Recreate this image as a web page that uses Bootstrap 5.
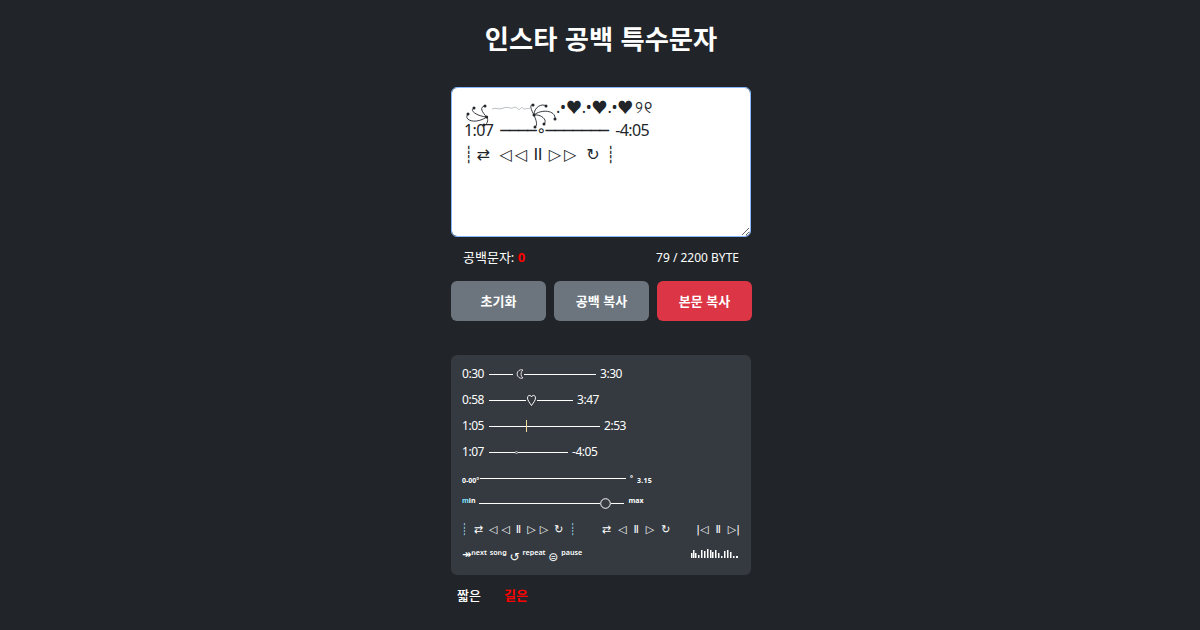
<!DOCTYPE html>
<html lang="ko">
<head>
<meta charset="utf-8">
<title>인스타 공백 특수문자</title>
<link rel="stylesheet" href="https://cdn.jsdelivr.net/npm/bootstrap@5.3.0/dist/css/bootstrap.min.css">
<style>
body{background:#212529;color:#fff;font-family:"Noto Sans","Noto Sans CJK KR",sans-serif;overflow:hidden;height:630px}
.shell{width:300px;margin:0 auto 0 451px}
.ttl{font-size:26.3px;font-weight:700;line-height:36px;margin:20px 0 31px;text-align:center;white-space:nowrap;font-family:"Noto Sans CJK KR",sans-serif}
.ed{position:relative;height:150px}
.ed textarea{height:150px;width:100%;font-family:"Noto Sans","DejaVu Sans","Noto Sans CJK KR",sans-serif;font-size:16px;line-height:24px;border-color:#86b7fe;border-radius:6px;color:#212529;white-space:pre;overflow:hidden;letter-spacing:-.65px;box-shadow:none}
.orn{position:absolute;left:10px;top:12px;pointer-events:none}
.hrts{position:absolute;left:105px;top:8px;line-height:24px;font-size:16px;color:#212529;font-family:"Noto Sans","Noto Sans CJK KR","DejaVu Sans",sans-serif;letter-spacing:-.2px;white-space:nowrap;pointer-events:none}
.hrts span{letter-spacing:.5px;margin-left:2px}
.stat{font-size:12px;height:42px;margin-bottom:2px;padding:0 12px}
.stat .kr{font-size:13px}
.stat b{color:#f00}
.acts{margin-right:-1px}
.acts .btn{flex:1 1 0;height:40px;font-size:13px;font-weight:700;color:#fff;border:0;border-radius:6px;font-family:"Noto Sans CJK KR",sans-serif;padding:0}
.acts .g1{background:#6c757d}.acts .g2{background:#dc3545}
.pane{background:#343a40;border-radius:6px;height:220px;margin-top:34px;padding:6px 11px 0;font-size:12px}
.ln{height:26px;white-space:nowrap;letter-spacing:-.45px}
.ln span.t{width:22px;flex:none}
.seg{display:block;height:1px;background:#fff;flex:none}
.w24{width:24px}.w72{width:72px}.w37{width:37px}.w36{width:36px}.w73{width:73px}.w26{width:26px}.w50{width:50px}.w146{width:146px}.w121{width:121px}.w13{width:13px}
.mk{flex:none}
.ln .tx{margin-left:4px}
.ln .s1{margin-left:5px}
.tiny{font-size:7px;font-weight:700;font-family:"Noto Sans",sans-serif;line-height:1;flex:none;white-space:nowrap}
.low{height:23px}
.r5{margin-top:2px}
.r6{margin-top:2px}
.dn{margin-top:4px}
.up{margin-top:-6px}
.lb1{width:18px}
.wd{letter-spacing:.3px}
.cy{color:#7fe3ff}
.ctl{height:29px;margin-top:1px;font-family:"DejaVu Sans",sans-serif;font-size:11px;white-space:nowrap;margin-left:-1px}
.ctl i{font-style:normal;flex:none;display:block;text-align:center}
.gl{gap:6px}
.gm{gap:7px}
.pr{margin-left:-2px}
.sep{color:#9ad7f0}
.fine{height:20px;font-family:"Noto Sans","DejaVu Sans",sans-serif;font-size:11px;font-weight:600;white-space:nowrap;margin-top:-1px}
.fine .big{font-size:12px;font-family:"DejaVu Sans",sans-serif;font-weight:400;position:relative;top:3px}
.bars{margin-top:-3px}
.tabs{font-size:13px;font-family:"Noto Sans CJK KR",sans-serif;height:40px;padding-left:6px;gap:23px}
.tabs .on{color:#f00;font-weight:700}
.tabs span:first-child{font-weight:500}
</style>
</head>
<body>
<div class="shell">
  <h1 class="ttl">인스타 공백 특수문자</h1>
  <div class="ed">
    <textarea class="form-control" spellcheck="false">

1:07  ────∘───────  -4:05
┊ ⇄   ◁ ◁  ⅠⅠ  ▷ ▷   ↻  ┊</textarea>
    <span class="hrts">.•♥.•♥.•♥<span>୨୧</span></span>
    <svg class="orn" width="110" height="32" viewBox="461 99 110 32" fill="none" stroke="#212529" stroke-width=".9">
      <g fill="#212529" stroke="none">
        <circle cx="486.7" cy="117" r="1.500"/><circle cx="485" cy="106" r="1.500"/><circle cx="474" cy="108" r="1.500"/><circle cx="468" cy="114" r="1.500"/><circle cx="484" cy="125" r="1.500"/>
        <circle cx="534" cy="115" r="1.500"/><circle cx="533" cy="105" r="1.500"/><circle cx="546" cy="106" r="1.500"/><circle cx="555" cy="119" r="1.500"/><circle cx="544" cy="124" r="1.500"/><circle cx="535" cy="127" r="1.500"/>
      </g>
      <path d="M486.7 117C482 112 479 107 485 106M486.7 117C476 116 469 110 474 108M486.7 117C475 125 463 120 468 114M486.7 117C489 120 487 125 484 125"/>
      <path d="M534 115C530 108 530 104 533 105M534 115C534 107 542 103 546 106M534 115C541 109 556 110 555 119M534 115C541 114 548 120 544 124M534 115C536 120 538 125 535 127"/>
      <path stroke="#9aa0a6" stroke-width=".7" d="M492 109C496 107 498 110 502 108.500S508 107 510 108 515 106 517 108 519 110 521 108 523 110 525 109 528 109 530 108"/>
    </svg>
  </div>
  <div class="stat d-flex justify-content-between align-items-center"><span class="kr">공백문자: <b>0</b></span><span>79 / 2200 BYTE</span></div>
  <div class="acts d-flex gap-2">
    <button class="btn g1">초기화</button>
    <button class="btn g1">공백 복사</button>
    <button class="btn g2">본문 복사</button>
  </div>
  <div class="pane">
    <div class="ln d-flex align-items-center"><span class="t">0:30</span><b class="seg w24 s1"></b><svg class="mk" width="11" height="10" viewBox="0 0 11 10"><path d="M10 1A4.300 4.300 0 1 0 10 9 5 5 0 0 1 10 1Z" fill="none" stroke="#f2e6ea" stroke-width=".9"/></svg><b class="seg w72"></b><span class="tx">3:30</span></div>
    <div class="ln d-flex align-items-center"><span class="t">0:58</span><b class="seg w37 s1"></b><svg class="mk" width="11" height="12" viewBox="0 0 11 12"><path d="M5.500 11.500C3.500 8.500 1.500 6.500 1.500 3.800 1.500 1 4.800 .6 5.500 3 6.200 .6 9.500 1 9.500 3.800 9.500 6.500 7.500 8.500 5.500 11.500Z" fill="none" stroke="#fff"/></svg><b class="seg w36"></b><span class="tx">3:47</span></div>
    <div class="ln d-flex align-items-center"><span class="t">1:05</span><b class="seg w37 s1"></b><svg class="mk" width="1" height="12" viewBox="0 0 1 12"><rect width="1" height="12" fill="#f3dca0"/></svg><b class="seg w73"></b><span class="tx">2:53</span></div>
    <div class="ln d-flex align-items-center"><span class="t">1:07</span><b class="seg w26 s1"></b><svg class="mk" width="3" height="3" viewBox="0 0 3 3"><circle cx="1.500" cy="1.500" r="1.100" fill="none" stroke="#fff" stroke-width=".7"/></svg><b class="seg w50"></b><span class="tx">-4:05</span></div>
    <div class="low r5 d-flex align-items-center"><span class="tiny lb1 dn">0-00°</span><b class="seg w146"></b><span class="tiny ms-1">°</span><span class="tiny dn wd ms-1">3.15</span></div>
    <div class="low r6 d-flex align-items-center"><span class="tiny up"><span class="cy">m</span>in</span><b class="seg w121 ms-1"></b><svg class="mk" width="11" height="11" viewBox="0 0 11 11"><circle cx="5.500" cy="5.500" r="4.800" fill="none" stroke="#fff"/></svg><b class="seg w13"></b><span class="tiny up ms-1">max</span></div>
    <div class="ctl d-flex align-items-center">
      <div class="d-flex align-items-center gl"><i class="sep">┊</i><i>⇄</i><i>◁</i><i class="pr">◁</i><i>Ⅱ</i><i>▷</i><i class="pr">▷</i><i>↻</i><i class="sep">┊</i></div>
      <div class="d-flex align-items-center gm ms-auto"><i>⇄</i><i>◁</i><i>Ⅱ</i><i>▷</i><i>↻</i></div>
      <div class="d-flex align-items-center gm ms-auto"><i>|◁</i><i>Ⅱ</i><i>▷|</i></div>
    </div>
    <div class="fine d-flex align-items-center">
      <span>↠ⁿᵉˣᵗ ˢᵒⁿᵍ <span class="big">↺</span> ʳᵉᵖᵉᵃᵗ <span class="big">⊜</span> ᵖᵃᵘˢᵉ</span>
      <svg class="ms-auto bars" width="49" height="11" viewBox="0 0 49 11" fill="#fff"><rect x="0" y="6" width="1.500" height="5"/><rect x="2" y="3" width="1.500" height="8"/><rect x="4" y="6" width="1.500" height="5"/><rect x="7" y="8" width="1.500" height="3"/><rect x="10" y="3" width="1.500" height="8"/><rect x="13" y="4" width="1.500" height="7"/><rect x="16" y="2" width="1.500" height="9"/><rect x="19" y="3" width="1.500" height="8"/><rect x="21" y="5" width="1.500" height="6"/><rect x="24" y="3" width="1.500" height="8"/><rect x="27" y="6" width="1.500" height="5"/><rect x="30" y="9" width="1.500" height="2"/><rect x="33" y="4" width="1.500" height="7"/><rect x="36" y="3" width="1.500" height="8"/><rect x="39" y="5" width="1.500" height="6"/><rect x="42" y="9" width="1.500" height="2"/><rect x="45" y="9" width="2" height="2"/></svg>
    </div>
  </div>
  <div class="tabs d-flex align-items-center"><span>짧은</span><span class="on">길은</span></div>
</div>
</body>
</html>
